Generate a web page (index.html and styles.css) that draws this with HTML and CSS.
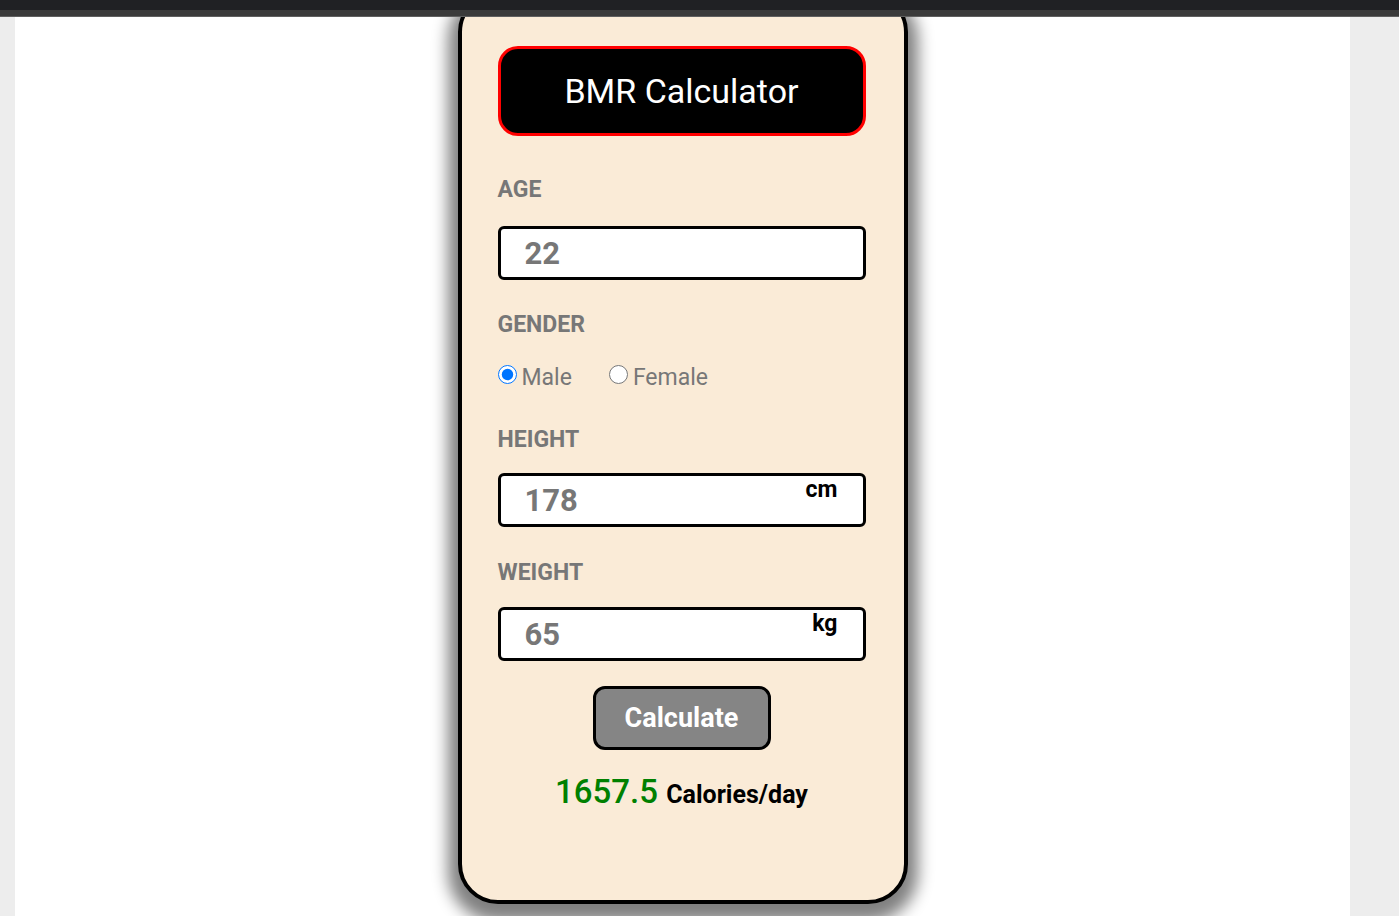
FILE: index.html
```html
<!DOCTYPE html>
<html lang="en">
<head>
<meta charset="utf-8">
<title>BMR Calculator</title>
<link rel="stylesheet" href="styles.css">
</head>
<body>
<div class="chrome">
  <div class="chrome-top"></div>
  <div class="chrome-mid"></div>
  <div class="chrome-line"></div>
</div>
<div class="viewport">
  <div class="gutter-left"></div>
  <main class="page">
    <section class="card">
      <h1 class="title">BMR Calculator</h1>

      <div class="label label-age">AGE</div>
      <div class="field field-age">
        <input class="input" type="text" value="22">
      </div>

      <div class="label label-gender">GENDER</div>
      <div class="radios">
        <label class="radio-opt"><input class="radio" type="radio" name="g" checked><span>Male</span></label>
        <label class="radio-opt radio-opt-second"><input class="radio" type="radio" name="g"><span>Female</span></label>
      </div>

      <div class="label label-height">HEIGHT</div>
      <div class="field field-height">
        <input class="input" type="text" value="178">
        <span class="unit">cm</span>
      </div>

      <div class="label label-weight">WEIGHT</div>
      <div class="field field-weight">
        <input class="input" type="text" value="65">
        <span class="unit">kg</span>
      </div>

      <div class="actions">
        <button class="btn" type="button">Calculate</button>
      </div>

      <div class="result"><span class="result-num">1657.5</span> <span class="result-unit">Calories/day</span></div>
    </section>
  </main>
  <div class="gutter-right"></div>
</div>
</body>
</html>
```

FILE: styles.css
```css
* { box-sizing: border-box; }

html, body {
  margin: 0;
  padding: 0;
  height: 916px;
  overflow: hidden;
  font-family: Roboto, "Liberation Sans", Arial, sans-serif;
}

.chrome { height: 17px; display: flex; flex-direction: column; }
.chrome-top { height: 10px; background: #202124; }
.chrome-mid { height: 6px; background: #3a3a3a; }
.chrome-line { height: 1px; background: #5f5f5f; }

.viewport {
  display: flex;
  height: 899px;
  overflow: hidden;
}
.gutter-left { width: 15px; background: #ededed; flex: none; }
.gutter-right { width: 49px; background: #ededed; flex: none; }

.page {
  flex: 1;
  background: #ffffff;
  display: flex;
  justify-content: center;
  align-items: flex-start;
  overflow: hidden;
}

.card {
  margin-top: -25px;
  width: 450px;
  background: #faebd7;
  border: 4px solid #000;
  border-radius: 40px;
  padding: 50px 38px 85px 36px;
  box-shadow: 0 8px 16px 10px #808080;
  display: flex;
  flex-direction: column;
}

.title {
  margin: 0;
  height: 90px;
  background: #000;
  border: 3px solid #ff0000;
  border-radius: 20px;
  color: #fff;
  font-weight: 400;
  font-size: 34px;
  display: flex;
  align-items: center;
  justify-content: center;
}

.label {
  font-size: 23px;
  line-height: 26px;
  font-weight: 700;
  color: #777;
}
.label-age { margin-top: 41px; }
.label-gender { margin-top: 32px; }
.label-height { margin-top: 36px; }
.label-weight { margin-top: 33px; }

.field { position: relative; }
.field-age { margin-top: 23px; }
.field-height { margin-top: 20px; }
.field-weight { margin-top: 21px; }

.input {
  display: block;
  width: 100%;
  height: 54px;
  margin: 0;
  border: 3px solid #000;
  border-radius: 6px;
  background: #fff;
  padding: 0 0 0 24px;
  font-family: Roboto, "Liberation Sans", Arial, sans-serif;
  font-size: 31px;
  font-weight: 700;
  color: #777;
  outline: none;
}

.unit {
  position: absolute;
  right: 28px;
  top: 4px;
  font-size: 23px;
  line-height: 26px;
  font-weight: 700;
  color: #000;
}

.radios {
  margin-top: 27px;
  display: flex;
  align-items: center;
}
.radio-opt {
  display: flex;
  align-items: center;
  gap: 5px;
  font-size: 23px;
  line-height: 26px;
  color: #777;
}
.radio-opt-second { margin-left: 37px; }
.radio {
  width: 19px;
  height: 19px;
  margin: 0 0 7px 0;
}

.actions {
  margin-top: 25px;
  display: flex;
  justify-content: center;
}
.btn {
  width: 178px;
  height: 64px;
  border: 3px solid #000;
  border-radius: 12px;
  background: #858585;
  color: #fff;
  font-family: Roboto, "Liberation Sans", Arial, sans-serif;
  font-size: 27px;
  font-weight: 700;
  padding: 0;
}

.result {
  margin-top: 22px;
  text-align: center;
  font-size: 33px;
  line-height: 40px;
}
.result-num { color: #008000; font-weight: 500; }
.result-unit { color: #000; font-weight: 700; font-size: 25px; }
```
